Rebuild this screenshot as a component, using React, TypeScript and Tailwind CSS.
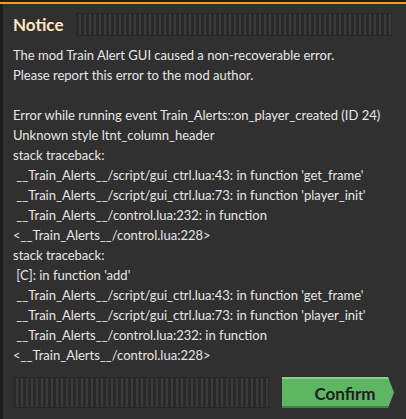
const lines: string[] = [
  "The mod Train Alert GUI caused a non-recoverable error.",
  "Please report this error to the mod author.",
  "",
  "Error while running event Train_Alerts::on_player_created (ID 24)",
  "Unknown style ltnt_column_header",
  "stack traceback:",
  " __Train_Alerts__/script/gui_ctrl.lua:43: in function 'get_frame'",
  " __Train_Alerts__/script/gui_ctrl.lua:73: in function 'player_init'",
  " __Train_Alerts__/control.lua:232: in function",
  "<__Train_Alerts__/control.lua:228>",
  "stack traceback:",
  " [C]: in function 'add'",
  " __Train_Alerts__/script/gui_ctrl.lua:43: in function 'get_frame'",
  " __Train_Alerts__/script/gui_ctrl.lua:73: in function 'player_init'",
  " __Train_Alerts__/control.lua:232: in function",
  "<__Train_Alerts__/control.lua:228>",
];

function Dragger({ className }: { className: string }) {
  return (
    <div
      className={
        "border-y border-[#282728] bg-[repeating-linear-gradient(90deg,#2a292a_0px,#2a292a_3px,#3b3a3b_3px,#3b3a3b_5px)] " +
        className
      }
    />
  );
}

export default function App() {
  return (
    <div className="flex h-[419px] w-[406px] flex-col overflow-hidden bg-[#1c1c1c] font-['Lato','Noto_Sans',sans-serif]">
      <div className="h-[2px] bg-[#1c1c1c]" />
      <div className="h-[2px] bg-[#f0a024]" />
      <div className="ml-[3px] flex flex-1 flex-col bg-[#313031]">
        <div className="mt-[9px] flex h-[23px] items-center pl-[10px] pr-[14px]">
          <span className="text-[17px] font-bold leading-none text-[#ffe6c0]">
            Notice
          </span>
          <Dragger className="ml-[12px] h-[23px] flex-1" />
        </div>

        <div className="mt-[9px] whitespace-pre pl-[10px] text-[13px] leading-[20px] text-[#e6e6e6]">
          {lines.map((line, i) => (
            <div key={i} className="h-[20px]">
              {line}
            </div>
          ))}
        </div>

        <div className="mt-[12px] flex items-center gap-[13px] pl-[10px] pr-[12px]">
          <Dragger className="h-[31px] flex-1" />
          <button
            type="button"
            className="flex h-[31px] w-[112px] items-center justify-center border-t-2 border-[#86d48a] bg-[#5eb663] pl-[14px] text-[17px] font-bold text-[#202020] shadow-[inset_0_-2px_0_#3d8341] [clip-path:polygon(0_0,calc(100%-6px)_0,100%_50%,calc(100%-6px)_100%,0_100%)]"
          >
            Confirm
          </button>
        </div>
      </div>
    </div>
  );
}
